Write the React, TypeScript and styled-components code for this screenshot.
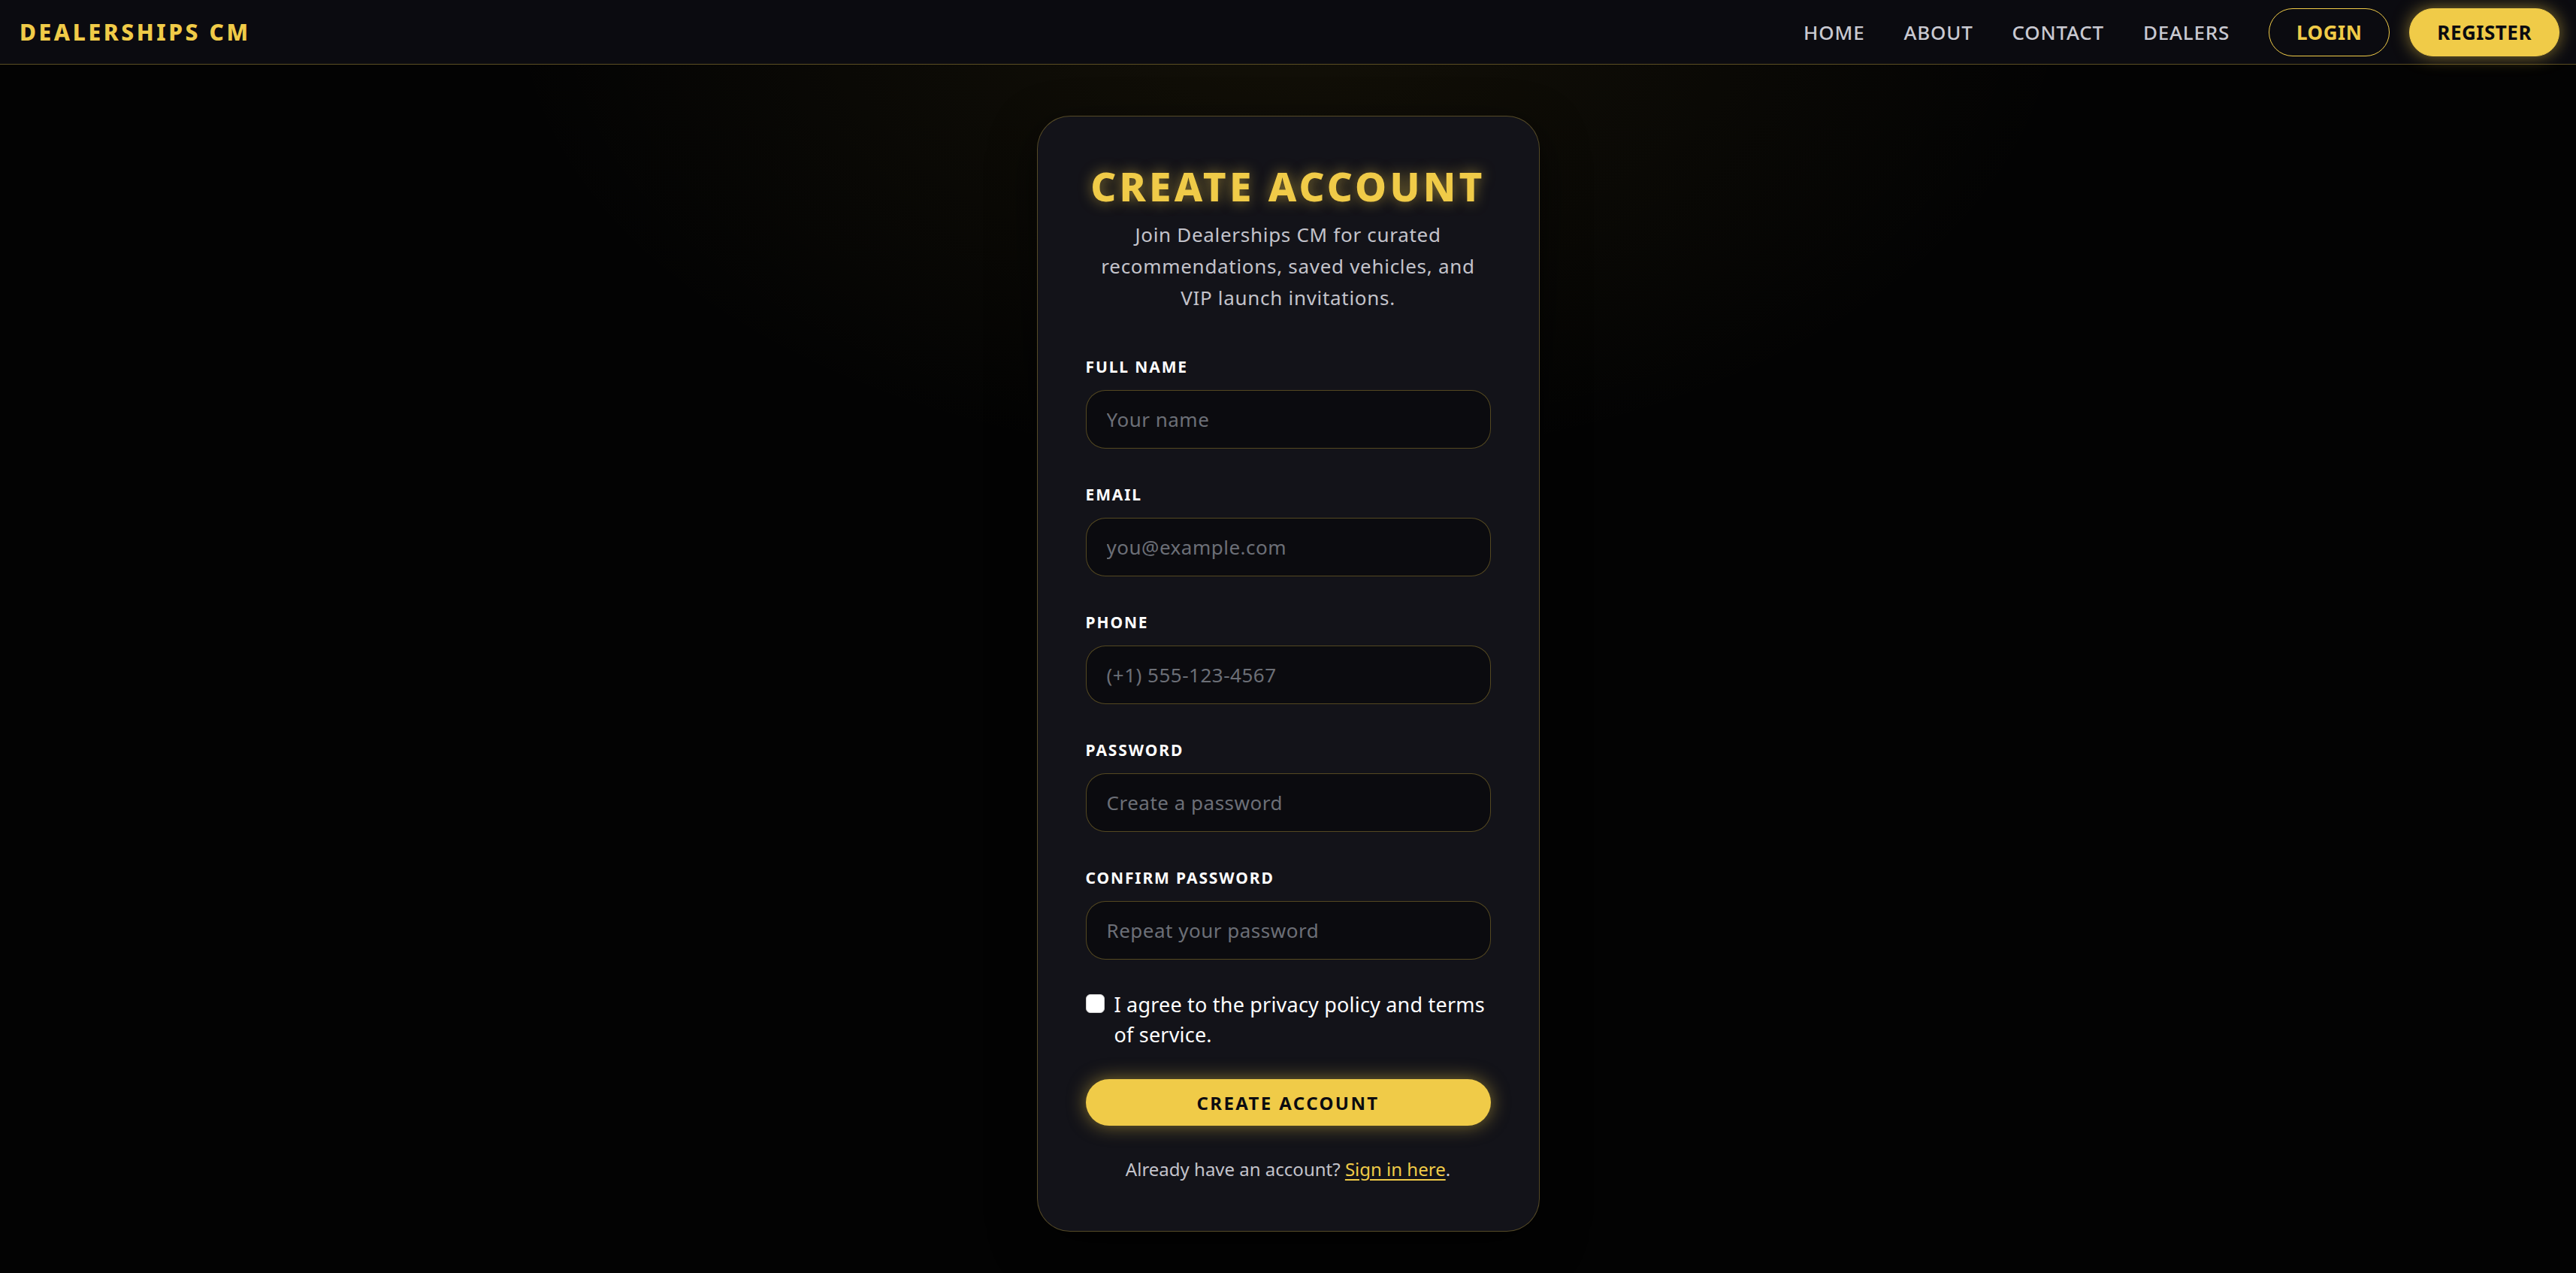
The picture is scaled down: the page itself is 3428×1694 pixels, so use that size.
import styled, { createGlobalStyle } from "styled-components";

const gold = "#f0cb48";
const font = `"Noto Sans", "Open Sans", sans-serif`;

const GlobalStyle = createGlobalStyle`
  html, body {
    margin: 0;
    padding: 0;
    height: 100%;
  }
  body {
    background: #030303;
    font-family: ${font};
    overflow: hidden;
  }
  #root {
    min-height: 100%;
  }
`;

const Page = styled.div`
  min-height: 1694px;
  display: flex;
  flex-direction: column;
  background:
    radial-gradient(ellipse 1500px 900px at 50% 0%, rgba(240, 203, 72, 0.07), rgba(240, 203, 72, 0) 70%),
    #030303;
`;

const NavBar = styled.header`
  height: 86px;
  box-sizing: border-box;
  display: flex;
  align-items: center;
  justify-content: space-between;
  padding: 0 22px 0 26px;
  background: #0b0b10;
  border-bottom: 1px solid rgba(240, 203, 72, 0.35);
`;

const Logo = styled.div`
  font-size: 30px;
  font-weight: 800;
  letter-spacing: 0.12em;
  color: ${gold};
`;

const NavRight = styled.nav`
  display: flex;
  align-items: center;
`;

const NavLink = styled.a`
  font-size: 26px;
  font-weight: 500;
  color: #c9c9d1;
  letter-spacing: 0.03em;
  text-decoration: none;
  margin-right: 52px;
`;

const NavButton = styled.a<{ $filled?: boolean }>`
  height: 64px;
  box-sizing: border-box;
  display: flex;
  align-items: center;
  justify-content: center;
  padding: 0 36px;
  border-radius: 32px;
  font-size: 26px;
  font-weight: 700;
  letter-spacing: 0.02em;
  text-decoration: none;
  border: 1.5px solid ${gold};
  color: ${(p) => (p.$filled ? "#0b0b10" : gold)};
  background: ${(p) => (p.$filled ? gold : "transparent")};
  box-shadow: ${(p) => (p.$filled ? "0 0 22px rgba(240, 203, 72, 0.55)" : "none")};
  margin-left: ${(p) => (p.$filled ? "26px" : "0")};
`;

const Main = styled.main`
  flex: 1;
  display: flex;
  justify-content: center;
  padding-top: 68px;
`;

const Card = styled.form`
  width: 669px;
  height: 1485px;
  box-sizing: border-box;
  padding: 62px 64px 0;
  background: #131319;
  border: 1.5px solid rgba(240, 203, 72, 0.3);
  border-radius: 44px;
  box-shadow: 0 20px 60px rgba(0, 0, 0, 0.6);
  display: flex;
  flex-direction: column;
`;

const Title = styled.h1`
  margin: 0;
  text-align: center;
  font-size: 53px;
  line-height: 62px;
  font-weight: 800;
  letter-spacing: 0.08em;
  color: ${gold};
  text-shadow: 0 0 18px rgba(240, 203, 72, 0.55);
`;

const Subtitle = styled.p`
  margin: 12px 0 57px;
  text-align: center;
  font-size: 26px;
  line-height: 42px;
  letter-spacing: 0.7px;
  color: #c3c3cb;
`;

const Field = styled.label`
  display: flex;
  flex-direction: column;
  margin-bottom: 47px;
`;

const FieldLabel = styled.span`
  font-size: 21px;
  line-height: 29px;
  font-weight: 700;
  letter-spacing: 0.09em;
  color: #ffffff;
  margin-bottom: 16px;
`;

const Input = styled.input`
  height: 78px;
  box-sizing: border-box;
  width: 100%;
  padding: 0 27px;
  background: #0b0b0f;
  border: 1.5px solid rgba(240, 203, 72, 0.32);
  border-radius: 26px;
  font-family: ${font};
  font-size: 26px;
  letter-spacing: 0.5px;
  color: #ffffff;
  outline: none;

  &::placeholder {
    color: #6c6f77;
  }
`;

const AgreeRow = styled.label`
  display: flex;
  align-items: flex-start;
  gap: 13px;
  margin-top: -7px;
  font-size: 27px;
  line-height: 40px;
  letter-spacing: 0.2px;
  color: #ffffff;
`;

const Check = styled.input`
  appearance: none;
  flex-shrink: 0;
  width: 25px;
  height: 25px;
  margin: 6px 0 0;
  background: #ffffff;
  border: 1px solid #d0d0d0;
  border-radius: 6px;
`;

const SubmitButton = styled.button`
  margin-top: 39px;
  height: 62px;
  width: 100%;
  border: none;
  border-radius: 31px;
  background: ${gold};
  color: #0b0b10;
  font-family: ${font};
  font-size: 24px;
  font-weight: 700;
  letter-spacing: 0.1em;
  box-shadow: 0 0 24px rgba(240, 203, 72, 0.5);
`;

const FooterNote = styled.p`
  margin: 40px 0 0;
  text-align: center;
  font-size: 24px;
  line-height: 36px;
  color: #c3c3cb;
`;

const SignIn = styled.a`
  color: ${gold};
  text-decoration: underline;
  text-underline-offset: 4px;
`;

const fields = [
  { label: "FULL NAME", placeholder: "Your name", type: "text" },
  { label: "EMAIL", placeholder: "you@example.com", type: "email" },
  { label: "PHONE", placeholder: "(+1) 555-123-4567", type: "tel" },
  { label: "PASSWORD", placeholder: "Create a password", type: "password" },
  { label: "CONFIRM PASSWORD", placeholder: "Repeat your password", type: "password" },
];

const App = () => {
  return (
    <Page>
      <GlobalStyle />
      <NavBar>
        <Logo>DEALERSHIPS CM</Logo>
        <NavRight>
          <NavLink href="#">HOME</NavLink>
          <NavLink href="#">ABOUT</NavLink>
          <NavLink href="#">CONTACT</NavLink>
          <NavLink href="#">DEALERS</NavLink>
          <NavButton href="#">LOGIN</NavButton>
          <NavButton href="#" $filled>REGISTER</NavButton>
        </NavRight>
      </NavBar>
      <Main>
        <Card onSubmit={(e) => e.preventDefault()}>
          <Title>CREATE ACCOUNT</Title>
          <Subtitle>
            Join Dealerships CM for curated
            <br />
            recommendations, saved vehicles, and
            <br />
            VIP launch invitations.
          </Subtitle>
          {fields.map((f) => (
            <Field key={f.label}>
              <FieldLabel>{f.label}</FieldLabel>
              <Input type={f.type} placeholder={f.placeholder} />
            </Field>
          ))}
          <AgreeRow>
            <Check type="checkbox" />
            <span>I agree to the privacy policy and terms of service.</span>
          </AgreeRow>
          <SubmitButton type="submit">CREATE ACCOUNT</SubmitButton>
          <FooterNote>
            Already have an account? <SignIn href="#">Sign in here</SignIn>.
          </FooterNote>
        </Card>
      </Main>
    </Page>
  );
};

export default App;
